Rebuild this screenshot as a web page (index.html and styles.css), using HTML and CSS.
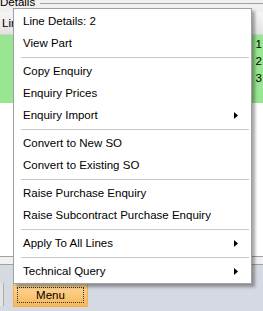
FILE: index.html
```html
<!DOCTYPE html>
<html lang="en">
  <head>
    <meta charset="UTF-8" />
    <title>Enquiry Details</title>
    <link rel="stylesheet" href="styles.css">
  </head>
  <body>
    <div class="screen">
      <div class="group-head">
        <span class="group-title">Details</span>
        <span class="group-line"></span>
      </div>

      <div class="grid">
        <div class="grid-header"><span>Line</span></div>
        <div class="grid-row"><span class="cell-no">1</span></div>
        <div class="grid-row"><span class="cell-no">2</span></div>
        <div class="grid-row"><span class="cell-no">3</span></div>
        <div class="grid-row"></div>
        <div class="grid-empty"></div>
        <div class="grid-footer"></div>
      </div>

      <div class="toolbar">
        <div class="btn-cut"></div>
        <button class="btn-menu"><span class="focus">Menu</span></button>
      </div>
    </div>

    <!-- context menu opened from the Menu button -->
    <div class="context-menu">
      <div class="item">Line Details: 2</div>
      <div class="item">View Part</div>
      <div class="sep"></div>
      <div class="item">Copy Enquiry</div>
      <div class="item">Enquiry Prices</div>
      <div class="item has-sub">Enquiry Import
        <svg class="arrow" width="4" height="7" viewBox="0 0 4 7"><polygon points="0,0 4,3.5 0,7" fill="#000"/></svg>
      </div>
      <div class="sep"></div>
      <div class="item">Convert to New SO</div>
      <div class="item">Convert to Existing SO</div>
      <div class="sep"></div>
      <div class="item">Raise Purchase Enquiry</div>
      <div class="item">Raise Subcontract Purchase Enquiry</div>
      <div class="sep"></div>
      <div class="item has-sub">Apply To All Lines
        <svg class="arrow" width="4" height="7" viewBox="0 0 4 7"><polygon points="0,0 4,3.5 0,7" fill="#000"/></svg>
      </div>
      <div class="sep"></div>
      <div class="item has-sub">Technical Query
        <svg class="arrow" width="4" height="7" viewBox="0 0 4 7"><polygon points="0,0 4,3.5 0,7" fill="#000"/></svg>
      </div>
    </div>
  </body>
</html>
```

FILE: styles.css
```css
:root {
  --form-bg: #f0f0f0;
  --row-green: #98e592;
  --toolbar: #d5d9e2;
  --line: #a0a0a0;
  --menu-border: #a0a0a0;
  --sep: #c8c8c8;
}

body {
  margin: 0;
  width: 263px;
  height: 311px;
  overflow: hidden;
  position: relative;
  font-family: "Liberation Sans", Arial, sans-serif;
  font-size: 11.5px;
  color: #000;
  background: var(--form-bg);
}

.screen {
  display: flex;
  flex-direction: column;
  height: 311px;
}

/* group box caption, cut at the top */
.group-head {
  height: 12px;
  display: flex;
  align-items: flex-start;
}
.group-title {
  line-height: 14px;
  margin-top: -5px;
  padding-right: 5px;
}
.group-line {
  flex: 1;
  margin-top: 3px;
  border-top: 1px solid var(--line);
}

/* grid */
.grid {
  display: flex;
  flex-direction: column;
  background: #fff;
}
.grid-header {
  height: 23px;
  display: flex;
  align-items: center;
  padding-left: 2px;
  background: linear-gradient(#f6f6f6, #e2e2e2);
  border-bottom: 1px solid #d0d0d0;
  box-sizing: border-box;
}
.grid-row {
  height: 17px;
  display: flex;
  align-items: center;
  justify-content: flex-end;
  padding-right: 1px;
  background: var(--row-green);
}
.grid-empty {
  height: 153px;
}
.grid-footer {
  height: 7px;
  border-top: 1px solid var(--line);
  border-bottom: 1px solid var(--line);
  background: var(--form-bg);
}

/* bottom buttons */
.toolbar {
  flex: 1;
  display: flex;
  align-items: flex-start;
  gap: 9px;
  padding-top: 18px;
  background: var(--toolbar);
}
.btn-cut {
  width: 3px;
  height: 23px;
  background: #e3e3e3;
  border-right: 1px solid #adadad;
}
.btn-menu {
  width: 75px;
  height: 24px;
  padding: 3px;
  margin: 0;
  font: inherit;
  color: #000;
  background: linear-gradient(#fdd89a, #f7b758);
  border: 1px solid #f0b04c;
  box-sizing: border-box;
  display: flex;
}
.btn-menu .focus {
  flex: 1;
  display: flex;
  align-items: center;
  justify-content: center;
  border: 1px dotted #333;
}

/* popup menu */
.context-menu {
  position: absolute;
  top: 8px;
  left: 13px;
  width: 239px;
  box-sizing: border-box;
  padding: 1px 2px;
  background: #fff;
  border: 1px solid var(--menu-border);
  box-shadow: 3px 3px 3px rgba(0, 0, 0, 0.35);
}
.item {
  height: 22px;
  line-height: 22px;
  padding: 0 11px 0 7px;
  display: flex;
  align-items: center;
  justify-content: space-between;
  white-space: nowrap;
}
.sep {
  height: 6px;
  display: flex;
  align-items: center;
  margin-left: 5px;
}
.sep::before {
  content: "";
  flex: 1;
  border-top: 1px solid var(--sep);
}
```
